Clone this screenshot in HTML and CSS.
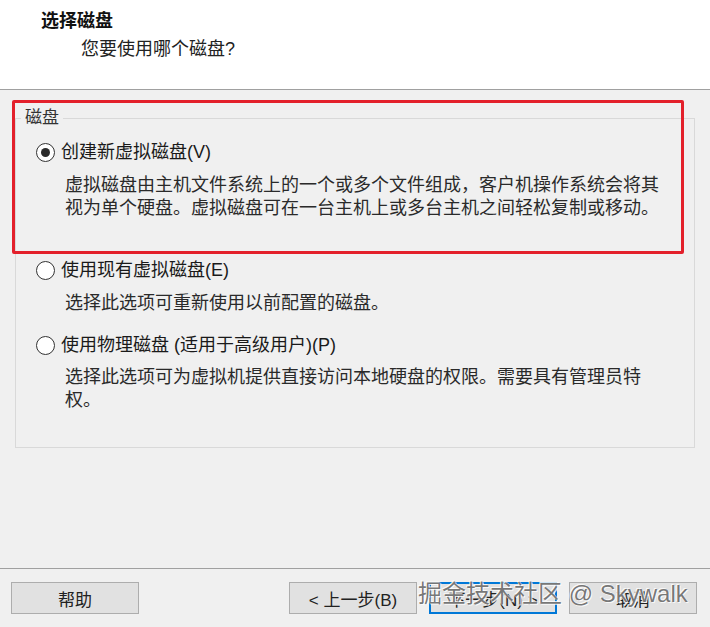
FILE: index.html
```html
<!DOCTYPE html>
<html lang="zh-CN">
<head>
<meta charset="utf-8">
<title>选择磁盘</title>
<link rel="stylesheet" href="styles.css">
</head>
<body>
<div class="page">
  <header class="header">
    <div class="title">选择磁盘</div>
    <div class="subtitle">您要使用哪个磁盘?</div>
  </header>
  <main class="main">
    <fieldset class="group">
      <legend class="legend">磁盘</legend>
      <div class="option">
        <span class="radio checked"></span>
        <span class="label">创建新虚拟磁盘(V)</span>
      </div>
      <p class="desc d1">虚拟磁盘由主机文件系统上的一个或多个文件组成，客户机操作系统会将其视为单个硬盘。虚拟磁盘可在一台主机上或多台主机之间轻松复制或移动。</p>
      <div class="option o2">
        <span class="radio"></span>
        <span class="label">使用现有虚拟磁盘(E)</span>
      </div>
      <p class="desc d2">选择此选项可重新使用以前配置的磁盘。</p>
      <div class="option o3">
        <span class="radio"></span>
        <span class="label">使用物理磁盘 (适用于高级用户)(P)</span>
      </div>
      <p class="desc d3">选择此选项可为虚拟机提供直接访问本地硬盘的权限。需要具有管理员特权。</p>
    </fieldset>
  </main>
  <footer class="footer">
    <button class="btn">帮助</button>
    <div class="nav">
      <button class="btn">&lt; 上一步(B)</button>
      <button class="btn primary">下一步(N) &gt;</button>
      <button class="btn">取消</button>
    </div>
  </footer>
  <div class="highlight"></div>
  <div class="watermark">掘金技术社区 @ Skywalk</div>
</div>
</body>
</html>
```

FILE: styles.css
```css
* { box-sizing: border-box; }
html, body { margin: 0; padding: 0; }
body {
  background: #f0f0f0;
  font-family: "Liberation Sans", "Noto Sans CJK SC", sans-serif;
  color: #1e1e1e;
}
.page {
  position: relative;
  width: 710px;
  height: 627px;
  display: flex;
  flex-direction: column;
  overflow: hidden;
}
.header {
  height: 90px;
  background: #ffffff;
  border-bottom: 1px solid #a0a0a0;
  padding-top: 9px;
}
.title {
  padding-left: 41px;
  font-size: 18px;
  font-weight: bold;
  line-height: 24px;
  color: #111;
}
.subtitle {
  margin-top: 4px;
  padding-left: 81px;
  font-size: 18px;
  line-height: 24px;
  color: #222;
}
.main {
  flex: 1;
  padding-top: 18px;
}
.group {
  margin: 0 15px;
  padding: 12px 20px 35px 20px;
  border: 1px solid #d9d9d9;
  min-width: 0;
}
.legend {
  margin-left: -15px;
  padding: 0 4px 0 4px;
  font-size: 17px;
  line-height: 20px;
  color: #333;
}
.option {
  display: flex;
  align-items: center;
  height: 24px;
}
.o2 { margin-top: 38px; }
.o3 { margin-top: 18px; }
.radio {
  width: 19px;
  height: 19px;
  border: 1.5px solid #333;
  border-radius: 50%;
  background: #fff;
  display: flex;
  align-items: center;
  justify-content: center;
  flex: none;
}
.radio.checked::after {
  content: "";
  width: 9px;
  height: 9px;
  border-radius: 50%;
  background: #2b2b2b;
}
.label {
  margin-left: 6px;
  font-size: 18px;
  line-height: 24px;
  color: #1a1a1a;
  white-space: nowrap;
}
.desc {
  margin: 10px 0 0 29px;
  width: 600px;
  font-size: 18px;
  line-height: 23px;
  color: #2a2a2a;
}
.d3 { margin-top: 9px; }
.footer {
  height: 59px;
  border-top: 1px solid #a0a0a0;
  padding: 13px 13px 0 11px;
  display: flex;
  justify-content: space-between;
  align-items: flex-start;
}
.nav {
  display: flex;
  gap: 12px;
}
.btn {
  width: 128px;
  height: 32px;
  background: #e1e1e1;
  border: 1px solid #adadad;
  font-family: "Liberation Sans", "Noto Sans CJK SC", sans-serif;
  font-size: 17px;
  color: #222;
  padding: 0;
}
.btn.primary {
  border: 2px solid #0078d7;
}
.highlight {
  position: absolute;
  left: 12px;
  top: 100px;
  width: 672px;
  height: 154px;
  border: 3px solid #e3202b;
  border-radius: 2px;
  pointer-events: none;
}
.watermark {
  position: absolute;
  left: 418px;
  top: 578px;
  font-size: 24px;
  line-height: 32px;
  color: rgba(95, 95, 95, 0.85);
  text-shadow: 0 0 1px #fff, 1px 1px 0 rgba(255,255,255,0.8), -1px -1px 0 rgba(255,255,255,0.8);
  white-space: nowrap;
  pointer-events: none;
}
```
